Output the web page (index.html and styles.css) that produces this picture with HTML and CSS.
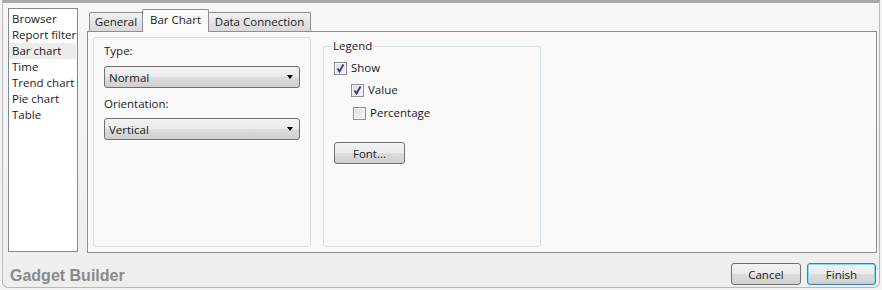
FILE: index.html
```html
<!DOCTYPE html>
<html lang="en">
<head>
<meta charset="utf-8">
<title>Gadget Builder</title>
<link rel="stylesheet" href="styles.css">
</head>
<body>
<div class="window">
  <div class="main">
    <ul class="nav">
      <li>Browser</li>
      <li>Report filter</li>
      <li class="sel">Bar chart</li>
      <li>Time</li>
      <li>Trend chart</li>
      <li>Pie chart</li>
      <li>Table</li>
    </ul>
    <div class="tabs">
      <div class="tabstrip">
        <div class="tab tab-general">General</div>
        <div class="tab tab-bar active">Bar Chart</div>
        <div class="tab tab-data">Data Connection</div>
      </div>
      <div class="panel">
        <div class="group group-left">
          <div class="label">Type:</div>
          <div class="combo"><span>Normal</span><i class="arrow"></i></div>
          <div class="label label-2">Orientation:</div>
          <div class="combo combo-2"><span>Vertical</span><i class="arrow"></i></div>
        </div>
        <fieldset class="group legend-box">
          <legend>Legend</legend>
          <div class="check row-show">
            <span class="box"><svg width="11" height="11" viewBox="0 0 11 11"><path d="M2.5 5.5 L4.5 8.5 L8.5 1.5" fill="none" stroke="#2a3a8c" stroke-width="1.8"/></svg></span>
            <span>Show</span>
          </div>
          <div class="check row-value">
            <span class="box"><svg width="11" height="11" viewBox="0 0 11 11"><path d="M2.5 5.5 L4.5 8.5 L8.5 1.5" fill="none" stroke="#2a3a8c" stroke-width="1.8"/></svg></span>
            <span>Value</span>
          </div>
          <div class="check row-pct">
            <span class="box"></span>
            <span>Percentage</span>
          </div>
          <div class="btn btn-font">Font...</div>
        </fieldset>
      </div>
    </div>
  </div>
  <div class="footer">
    <div class="title">Gadget Builder</div>
    <div class="buttons">
      <div class="btn btn-cancel">Cancel</div>
      <div class="btn btn-finish">Finish</div>
    </div>
  </div>
</div>
</body>
</html>
```
FILE: styles.css
```css
* { box-sizing: border-box; }
html, body {
  margin: 0;
  padding: 0;
  width: 882px;
  height: 290px;
  background: #f3f3f3;
  overflow: hidden;
}
body {
  font-family: "Open Sans", "Segoe UI", sans-serif;
  font-size: 11.5px;
  color: #1b1b1b;
}
.window {
  margin-left: 2px;
  width: 878px;
  height: 288px;
  border-top: 3px solid #a9a9a9;
  border-left: 1px solid #b9b9b9;
  border-right: 1px solid #b9b9b9;
  border-bottom: 1px solid #b9b9b9;
  border-bottom-left-radius: 6px;
  border-bottom-right-radius: 6px;
  background: linear-gradient(#f6f6f6, #eeeeee);
  display: flex;
  flex-direction: column;
}
.main {
  display: flex;
  align-items: flex-start;
  padding: 5px 2px 0 5px;
  height: 250px;
}
.nav {
  list-style: none;
  margin: 0;
  padding: 2px 1px 0 0;
  width: 70px;
  height: 244px;
  border: 1px solid #828790;
  background: #ffffff;
}
.nav li {
  height: 16px;
  line-height: 16px;
  padding-left: 3px;
  white-space: nowrap;
}
.nav li.sel { background: #ececec; }
.tabs {
  margin-left: 9px;
  margin-top: 1px;
  width: 790px;
  display: flex;
  flex-direction: column;
}
.tabstrip {
  display: flex;
  align-items: flex-end;
  height: 22px;
  padding-left: 2px;
}
.tab {
  height: 19px;
  line-height: 17px;
  text-align: center;
  border: 1px solid #8c8e94;
  border-bottom: none;
  border-radius: 2px 2px 0 0;
  background: linear-gradient(#f2f2f2, #e3e3e3 50%, #d9d9d9);
}
.tab-general { width: 54px; }
.tab-bar { width: 67px; margin-left: -1px; }
.tab-data { width: 103px; margin-left: -1px; }
.tab.active {
  height: 23px;
  line-height: 19px;
  margin-bottom: -1px;
  background: #fafafa;
  position: relative;
  z-index: 1;
}
.panel {
  height: 222px;
  border: 1px solid #8c8e94;
  background: #f9f9f9;
  display: flex;
  align-items: flex-start;
  padding: 5px 0 0 5px;
}
.group {
  border: 1px solid #d5dfe5;
  border-radius: 3px;
  width: 218px;
}
.group-left {
  height: 210px;
  padding: 5px 0 0 10px;
}
.label {
  height: 16px;
  line-height: 16px;
}
.label-2 { margin-top: 8px; }
.combo {
  margin-top: 7px;
  width: 196px;
  height: 22px;
  border: 1px solid #707070;
  border-radius: 3px;
  background: linear-gradient(#f2f2f2, #ebebeb 50%, #dddddd 50%, #cfcfcf);
  display: flex;
  align-items: center;
  justify-content: space-between;
  padding: 0 6px 0 4px;
}
.combo-2 { margin-top: 6px; }
.arrow {
  width: 0;
  height: 0;
  border-left: 3.5px solid transparent;
  border-right: 3.5px solid transparent;
  border-top: 4px solid #000;
}
.legend-box {
  margin: 1px 0 0 12px;
  height: 209px;
  padding: 0 0 0 10px;
  min-width: 0;
}
.legend-box legend {
  margin-left: -2px;
  padding: 0 1px;
  line-height: 16px;
  height: 16px;
}
.check {
  display: flex;
  align-items: center;
  height: 16px;
  line-height: 16px;
}
.row-show { margin-top: 6px; }
.row-value { margin-top: 6px; padding-left: 17px; }
.row-pct { margin-top: 7px; padding-left: 19px; }
.box {
  width: 13px;
  height: 13px;
  border: 1px solid #8e8f8f;
  background: linear-gradient(135deg, #dcdcdc, #f8f8f8);
  box-shadow: inset 0 0 0 1px #f4f4f4;
  margin-right: 4px;
  display: flex;
  align-items: center;
  justify-content: center;
}
.box svg { display: block; }
.btn {
  height: 22px;
  border: 1px solid #707070;
  border-radius: 3px;
  background: linear-gradient(#f2f2f2, #ebebeb 50%, #dddddd 50%, #cfcfcf);
  display: flex;
  align-items: center;
  justify-content: center;
}
.btn-font {
  width: 71px;
  margin-top: 21px;
}
.footer {
  flex: 1;
  display: flex;
  align-items: flex-start;
  justify-content: space-between;
  padding: 10px 3px 0 7px;
}
.title {
  font-family: "Liberation Sans", Arial, sans-serif;
  font-weight: bold;
  font-size: 16px;
  color: #8a8a8a;
  margin-top: 4px;
}
.buttons {
  display: flex;
  gap: 6px;
}
.btn-cancel { width: 70px; }
.btn-finish {
  width: 69px;
  border-color: #3c7fb1;
  box-shadow: inset 0 0 0 1px #7fdcf9;
}
```
